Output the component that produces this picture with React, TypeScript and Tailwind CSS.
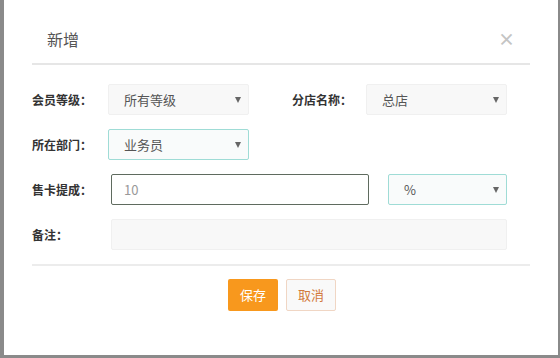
import React from "react";

const font = { fontFamily: '"Noto Sans CJK SC", "Noto Sans", sans-serif' };

function Arrow() {
  return (
    <span className="h-0 w-0 border-x-[3.5px] border-t-[6px] border-x-transparent border-t-[#666]" />
  );
}

function Select({
  value,
  className,
  active,
}: {
  value: string;
  className: string;
  active?: boolean;
}) {
  return (
    <div
      className={`flex h-[31px] items-center justify-between rounded-[2px] border pl-[15px] pr-[7px] text-[13px] text-[#555] ${
        active ? "border-[#9fdcd6] bg-[#f9fbfb]" : "border-[#f0f0f0] bg-[#f8f8f8]"
      } ${className}`}
    >
      <span>{value}</span>
      <Arrow />
    </div>
  );
}

function Label({ children }: { children: React.ReactNode }) {
  return (
    <div className="w-[76px] shrink-0 text-[12px] font-bold text-[#333]">{children}</div>
  );
}

export default function App() {
  return (
    <div
      className="flex h-[358px] w-[560px] bg-[#8a8a8a] pb-[3px] pl-[4px] pr-[2px]"
      style={font}
    >
      <div className="flex-1 bg-white px-[28px]">
        <div className="flex h-[63px] items-center justify-between pl-[15px] pr-[15px] pt-[14px]">
          <span className="text-[16px] text-[#555]">新增</span>
          <span className="text-[17px] font-bold leading-none text-[#c4c4c4]">×</span>
        </div>
        <div className="h-[2px] bg-[#e6e6e6]" />

        <div className="flex flex-col gap-[14px] pt-[19px]">
          <div className="flex items-center">
            <Label>会员等级：</Label>
            <Select value="所有等级" className="w-[141px]" />
            <div className="ml-[43px]">
              <Label>分店名称：</Label>
            </div>
            <Select value="总店" className="ml-[-2px] w-[141px]" />
          </div>
          <div className="flex items-center">
            <Label>所在部门：</Label>
            <Select value="业务员" className="w-[141px]" active />
          </div>
          <div className="flex items-center">
            <Label>售卡提成：</Label>
            <div className="ml-[3px] flex h-[31px] w-[258px] items-center rounded-[2px] border border-[#5f6b5f] pl-[12px] text-[13px] text-[#999]">
              10
            </div>
            <Select value="%" className="ml-[19px] w-[119px]" active />
          </div>
          <div className="flex items-center">
            <Label>备注：</Label>
            <div className="ml-[3px] h-[31px] w-[396px] rounded-[2px] border border-[#f0f0f0] bg-[#f8f8f8]" />
          </div>
        </div>

        <div className="mt-[14px] h-[2px] bg-[#ececec]" />

        <div className="flex justify-center gap-[8px] pt-[13px] pl-[2px]">
          <button className="h-[32px] w-[50px] rounded-[2px] bg-[#f8981d] text-[13px] text-white">
            保存
          </button>
          <button className="h-[32px] w-[50px] rounded-[2px] border border-[#f0d6c4] bg-[#f9f9f9] text-[13px] text-[#d2793c]">
            取消
          </button>
        </div>
      </div>
    </div>
  );
}
